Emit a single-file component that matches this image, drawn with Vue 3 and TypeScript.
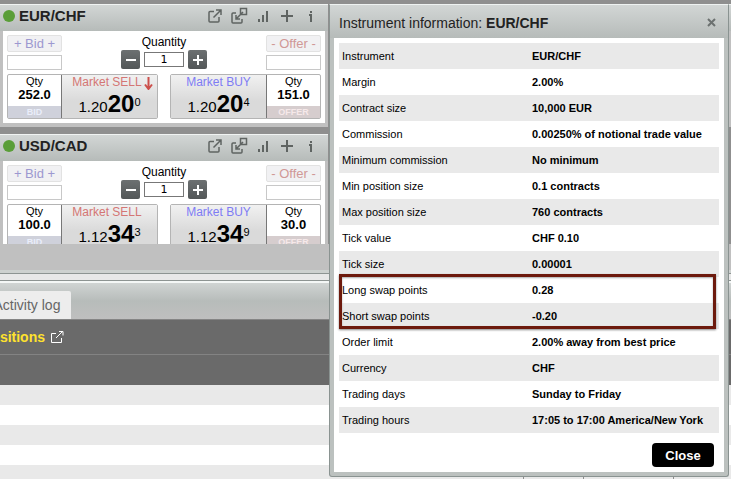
<script setup lang="ts">
import { ref } from 'vue'

interface Quote {
  pair: string
  bidQty: string
  offerQty: string
  base: string
  pips: string
  sellPoint: string
  buyPoint: string
  falling: boolean
}

const quotes: Quote[] = [
  { pair: 'EUR/CHF', bidQty: '252.0', offerQty: '151.0', base: '1.20', pips: '20', sellPoint: '0', buyPoint: '4', falling: true },
  { pair: 'USD/CAD', bidQty: '100.0', offerQty: '30.0', base: '1.12', pips: '34', sellPoint: '3', buyPoint: '9', falling: false },
]

const quantities = ref<string[]>(['1', '1'])
const limits = ref(quotes.map(() => ({ bid: '', offer: '' })))

function step(index: number, by: number) {
  quantities.value[index] = String(Math.max(0, Number(quantities.value[index]) + by))
}

const facts: [string, string][] = [
  ['Instrument', 'EUR/CHF'],
  ['Margin', '2.00%'],
  ['Contract size', '10,000 EUR'],
  ['Commission', '0.00250% of notional trade value'],
  ['Minimum commission', 'No minimum'],
  ['Min position size', '0.1 contracts'],
  ['Max position size', '760 contracts'],
  ['Tick value', 'CHF 0.10'],
  ['Tick size', '0.00001'],
  ['Long swap points', '0.28'],
  ['Short swap points', '-0.20'],
  ['Order limit', '2.00% away from best price'],
  ['Currency', 'CHF'],
  ['Trading days', 'Sunday to Friday'],
  ['Trading hours', '17:05 to 17:00 America/New York'],
]

const open = ref(true)
</script>

<template>
  <div class="platform">
    <main class="workspace">
      <div class="quotes">
        <section v-for="(q, i) in quotes" :key="q.pair" class="panel">
          <header class="panel-head">
            <span class="status"></span>
            <h2>{{ q.pair }}</h2>
            <nav class="tools">
              <button type="button" aria-label="Pop out">
                <svg width="16" height="16" viewBox="0 0 16 16"><path d="M7 3.500H3q-1 0-1 1V13q0 1 1 1h8q1 0 1-1V9M6.500 9.500L13.500 2.500M9 2h5v5" /></svg>
              </button>
              <button type="button" aria-label="Dock">
                <svg width="18" height="18" viewBox="0 0 18 18"><path d="M6 6H3q-1 0-1 1v8q0 1 1 1h8q1 0 1-1v-3M10.500 1.500h6v6h-6zM13 5L6 12M6 8v4h4" /></svg>
              </button>
              <button type="button" aria-label="Chart">
                <svg width="12" height="14" viewBox="0 0 12 14"><path class="bars" d="M2 10v3M6 6v7M10 2v11" /></svg>
              </button>
              <button type="button" aria-label="Add">
                <svg width="12" height="14" viewBox="0 0 12 14"><path class="bold" d="M0 7h12M6 1v12" /></svg>
              </button>
              <button type="button" aria-label="Instrument information" @click="open = true">
                <svg width="6" height="14" viewBox="0 0 6 14"><path class="bold" d="M3 2v2M1 6h2v7" /></svg>
              </button>
            </nav>
          </header>
          <div class="ticket">
            <div class="entry">
              <div class="limit">
                <button type="button" class="side bid">+ Bid +</button>
                <input v-model="limits[i].bid" type="text" :aria-label="`${q.pair} bid price`" />
              </div>
              <div class="quantity">
                <label :for="`qty-${i}`">Quantity</label>
                <div class="stepper">
                  <button type="button" aria-label="Decrease quantity" @click="step(i, -1)">
                    <svg width="10" height="10" viewBox="0 0 10 10"><path d="M0 5h10" /></svg>
                  </button>
                  <input :id="`qty-${i}`" v-model="quantities[i]" type="text" />
                  <button type="button" aria-label="Increase quantity" @click="step(i, 1)">
                    <svg width="10" height="10" viewBox="0 0 10 10"><path d="M0 5h10M5 0v10" /></svg>
                  </button>
                </div>
              </div>
              <div class="limit">
                <button type="button" class="side offer">- Offer -</button>
                <input v-model="limits[i].offer" type="text" :aria-label="`${q.pair} offer price`" />
              </div>
            </div>
            <div class="prices">
              <div class="deal">
                <div class="size">
                  <span>Qty</span>
                  <strong>{{ q.bidQty }}</strong>
                  <em class="bid-tag">BID</em>
                </div>
                <button type="button" class="price sell">
                  <span class="caption">Market SELL</span>
                  <span class="rate">{{ q.base }}<b>{{ q.pips }}</b><i>{{ q.sellPoint }}</i></span>
                  <svg v-if="q.falling" class="trend" width="9" height="13" viewBox="0 0 9 13"><path d="M4.500 0v12M1 7.500l3.500 4.500L8 7.500" /></svg>
                </button>
              </div>
              <div class="deal">
                <button type="button" class="price buy">
                  <span class="caption">Market BUY</span>
                  <span class="rate">{{ q.base }}<b>{{ q.pips }}</b><i>{{ q.buyPoint }}</i></span>
                </button>
                <div class="size">
                  <span>Qty</span>
                  <strong>{{ q.offerQty }}</strong>
                  <em class="offer-tag">OFFER</em>
                </div>
              </div>
            </div>
          </div>
        </section>
      </div>
      <div class="quotes">
        <section class="panel">
          <div class="panel-head"></div>
          <div class="ticket"></div>
        </section>
      </div>
    </main>
    <div class="shelf"></div>
    <div class="splitter"></div>
    <section class="activity">
      <div class="tabs"><button type="button">Activity log</button></div>
      <div class="positions">
        <h3>Positions</h3>
        <a href="#positions" aria-label="Pop out positions">
          <svg width="14" height="14" viewBox="0 0 14 14"><path d="M6 3.500H1.500v9h10V8M6 8l6-6M9 1.500h4v4" /></svg>
        </a>
      </div>
      <div class="columns"></div>
      <div class="rows"><span></span><span></span><span></span><span></span></div>
    </section>

    <section v-if="open" class="dialog" role="dialog" aria-labelledby="dialog-title">
      <header class="dialog-head">
        <h1 id="dialog-title">Instrument information: <b>EUR/CHF</b></h1>
        <button type="button" aria-label="Dismiss" @click="open = false">
          <svg width="9" height="9" viewBox="0 0 9 9"><path d="M1 1l7 7M8 1L1 8" /></svg>
        </button>
      </header>
      <div class="dialog-body">
        <div class="facts">
          <table>
            <tbody>
              <tr v-for="[name, value] in facts" :key="name">
                <th scope="row">{{ name }}</th>
                <td>{{ value }}</td>
              </tr>
            </tbody>
          </table>
          <div class="callout"></div>
        </div>
        <footer><button type="button" class="close" @click="open = false">Close</button></footer>
      </div>
    </section>
  </div>
</template>

<style>
body {
  overflow: hidden;
}
</style>

<style scoped>
.platform {
  position: relative;
  display: flex;
  flex-direction: column;
  height: 100vh;
  overflow: hidden;
  background: #8f8f8f;
  color: #000;
  font-family: "Liberation Sans", Arial, sans-serif;
  font-size: 12px;
}
* {
  box-sizing: border-box;
}
h1, h2, h3 {
  margin: 0;
}
button, input {
  margin: 0;
  padding: 0;
  font-family: inherit;
  color: inherit;
}
button {
  border: 0;
  background: none;
}
svg {
  display: block;
  fill: none;
  stroke: currentColor;
}
.workspace {
  display: grid;
  grid-template-columns: 328px 1fr;
  gap: 7px;
  flex: none;
  height: 244px;
  padding-top: 4px;
  overflow: hidden;
}
.quotes {
  display: flex;
  flex-direction: column;
  gap: 7px;
}
.panel {
  flex: none;
  padding: 0 3px 4px;
  border-top: 1px solid #f0f3f2;
  background: #c0c0c0;
}
.panel-head {
  display: flex;
  align-items: center;
  gap: 4px;
  height: 26px;
  margin: 0 -3px;
  padding: 0 5px 4px 3px;
  background: linear-gradient(#d2d6d5, #b6bbb9);
}
.status {
  width: 12px;
  height: 12px;
  border-radius: 50%;
  background: #5a9e38;
}
h2 {
  flex: 1;
  color: #222;
  font-size: 15px;
  line-height: 20px;
}
.tools {
  display: flex;
  align-items: center;
  color: #5f6462;
}
.tools button {
  display: grid;
  place-items: center;
  width: 24px;
  height: 20px;
}
.tools svg {
  stroke-width: 1.500;
}
.tools .bars {
  stroke-width: 2;
}
.tools .bold {
  stroke-width: 2;
}
.ticket {
  height: 92px;
  padding: 4px;
  background: #fff;
}
.entry {
  display: flex;
  justify-content: space-between;
  height: 39px;
}
.limit {
  display: flex;
  flex-direction: column;
  gap: 3px;
  width: 55px;
}
.side {
  height: 17px;
  border: 1px solid #e2e2e2;
  border-radius: 2px;
  background: #f1f1f3;
  font-size: 13px;
  line-height: 15px;
  white-space: nowrap;
}
.side.bid {
  color: #9c98d0;
}
.side.offer {
  color: #d09896;
}
.limit input {
  width: 100%;
  height: 15px;
  border: 1px solid #c8c8c8;
}
.quantity {
  display: flex;
  flex-direction: column;
  align-items: center;
}
.quantity label {
  line-height: 15px;
}
.stepper {
  display: flex;
  align-items: center;
  gap: 4px;
}
.stepper button {
  display: grid;
  place-items: center;
  width: 19px;
  height: 19px;
  border-radius: 2px;
  background: linear-gradient(#6c7071, #535758);
  color: #fff;
}
.stepper svg {
  stroke-width: 2;
}
.stepper input {
  width: 40px;
  height: 15px;
  border: 1px solid #777;
  text-align: center;
  font-family: "DejaVu Sans", sans-serif;
  font-size: 11px;
}
.prices {
  display: flex;
  justify-content: space-between;
}
.deal {
  display: flex;
  width: 151px;
  height: 45px;
  border: 1px solid #b4b4b4;
  border-radius: 2px;
}
.size {
  display: flex;
  flex-direction: column;
  flex: none;
  width: 53px;
  text-align: center;
  font-size: 11px;
  line-height: 13px;
}
.size strong {
  height: 18px;
  font-size: 13px;
}
.size em {
  font-size: 9px;
  font-style: normal;
  font-weight: bold;
  line-height: 12px;
}
.bid-tag {
  background: #cfd1db;
  color: #eaeefa;
}
.offer-tag {
  background: #d6cdce;
  color: #f6e9ea;
}
.price {
  position: relative;
  display: flex;
  flex-direction: column;
  align-items: center;
  justify-content: flex-start;
  flex: 1;
  background: linear-gradient(#f1f1f1, #dadada 60%);
}
.sell {
  border-left: 1px solid #777;
}
.buy {
  border-right: 1px solid #777;
}
.caption {
  font-size: 12px;
  line-height: 14px;
}
.sell .caption {
  padding-right: 5px;
  color: #d47674;
}
.buy .caption {
  color: #7e7cf4;
}
.rate {
  font-size: 15px;
  line-height: 26px;
}
.rate b {
  font-size: 24px;
}
.rate i {
  font-size: 11px;
  font-style: normal;
  vertical-align: 6px;
}
.trend {
  position: absolute;
  top: 2px;
  right: 4px;
  color: #cc4f4b;
  stroke-width: 2;
}
.shelf {
  flex: none;
  height: 29px;
  border-bottom: 3px solid #cdd1cf;
  background: #c0c0c0;
}
.splitter {
  flex: none;
  height: 8px;
  border: 1px solid #8d9492;
  border-width: 1px 0;
  background: #e8e8e8;
}
.activity {
  display: flex;
  flex-direction: column;
  flex: 1;
}
.tabs {
  display: flex;
  align-items: flex-end;
  height: 39px;
  border-top: 2px solid #f4f7f6;
  border-bottom: 1px solid #858585;
  background: linear-gradient(#d0d4d3, #b7bcba 50%, #bfbfbf);
}
.tabs button {
  width: 88px;
  height: 28px;
  margin-left: -17px;
  border-radius: 0 2px 0 0;
  background: #ededed;
  color: #666;
  font-size: 14px;
  white-space: nowrap;
}
.positions {
  display: flex;
  align-items: center;
  gap: 5px;
  height: 35px;
  margin-left: -18px;
  border-bottom: 1px solid #838383;
  background: #6a6a6a;
  color: #fff;
}
.positions a {
  color: inherit;
}
h3 {
  color: #ffe22e;
  font-size: 14px;
}
.columns {
  height: 30px;
  background: #6a6a6a;
}
.rows {
  display: grid;
  grid-template-columns: 524px 60px 90px 1fr;
  flex: 1;
  background: repeating-linear-gradient(#e9e9e9 0 20px, #fff 20px 40px);
}
.rows span:not(:last-child) {
  border-right: 1px solid #8f8f8f;
}
.dialog {
  position: absolute;
  top: 4px;
  right: 2px;
  left: 329px;
  padding: 0 4px 4px;
  border: 1px solid #8a9391;
  border-top-color: #eef2f1;
  border-radius: 0 0 3px 3px;
  background: #bcc1bf;
}
.dialog-head {
  display: flex;
  align-items: center;
  justify-content: space-between;
  height: 33px;
  margin: 0 -4px;
  padding: 2px 12px 0 9px;
  background: linear-gradient(#d2d6d5, #b6bbb9);
  color: #6c7170;
}
h1 {
  color: #222;
  font-size: 14px;
  font-weight: normal;
  line-height: 20px;
}
.dialog-head svg {
  stroke-width: 2;
}
.dialog-body {
  padding: 5px;
  background: #fff;
}
.facts {
  position: relative;
}
table {
  width: 100%;
  border-collapse: collapse;
  font-size: 11px;
  line-height: 26px;
}
tr:nth-child(odd) {
  background: #e9e9e9;
}
th, td {
  padding: 0 0 0 3px;
  text-align: left;
  white-space: nowrap;
}
th {
  width: 50%;
  font-weight: normal;
}
td {
  font-weight: bold;
}
/* Frames the two swap rows, the tenth and eleventh of the table. */
.callout {
  position: absolute;
  top: 231px;
  right: 3px;
  left: 0;
  height: 55px;
  border: 3px solid #6d1a0d;
  box-shadow: 0 1px 2px #888, inset 0 1px 2px #aaa;
}
footer {
  display: flex;
  justify-content: flex-end;
  padding: 10px 5px 0;
}
.close {
  width: 62px;
  height: 24px;
  border-radius: 4px;
  background: #000;
  color: #fff;
  font-size: 13px;
  font-weight: bold;
}
</style>
